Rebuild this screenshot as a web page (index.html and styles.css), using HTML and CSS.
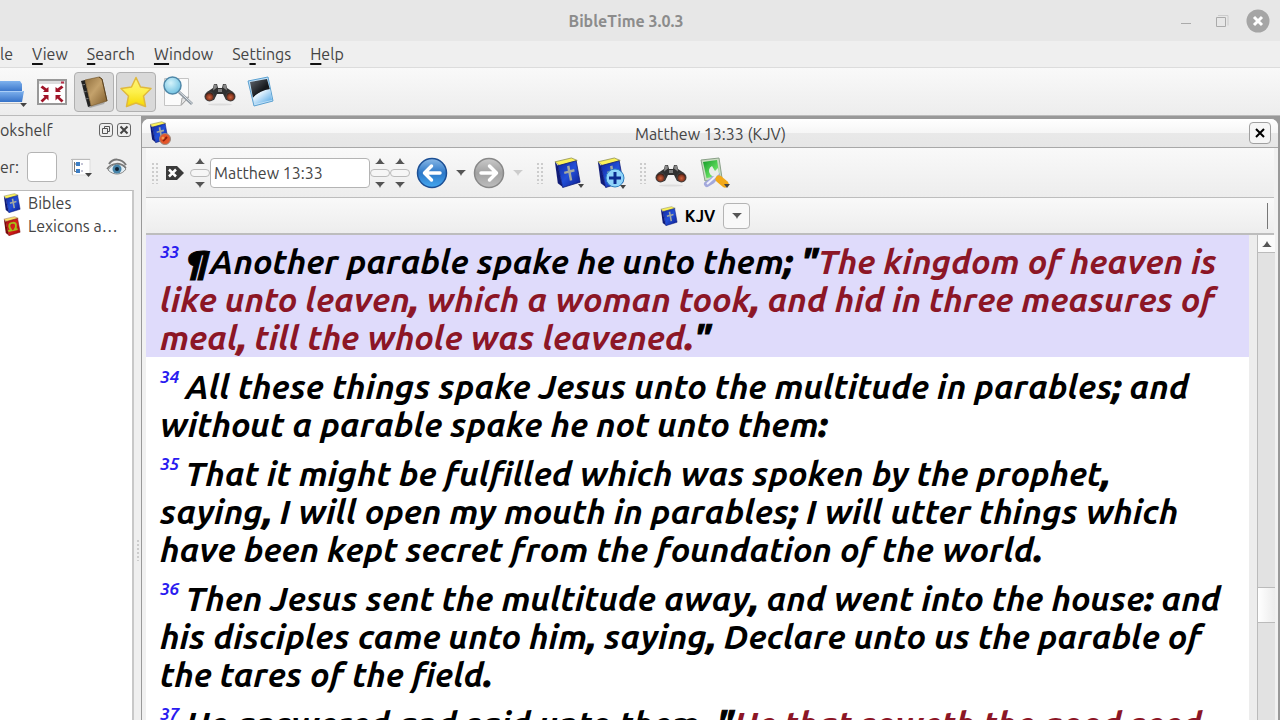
FILE: index.html
```html
<!DOCTYPE html>
<html lang="en">
<head>
	<meta charset="utf-8">
	<meta name="viewport" content="width=device-width, initial-scale=1">
	<title>BibleTime 3.0.3</title>
	<link rel="stylesheet" href="styles.css">
</head>
<body>
	<!-- shared icons -->
	<svg class="sprite" aria-hidden="true">
		<defs>
			<linearGradient id="blue-cover" x1="0" y1="0" x2="1" y2="1">
				<stop offset="0" stop-color="#1026a0"/>
				<stop offset=".5" stop-color="#2350d8"/>
				<stop offset="1" stop-color="#0a1a8c"/>
			</linearGradient>
			<linearGradient id="red-cover" x1="0" y1="0" x2="1" y2="1">
				<stop offset="0" stop-color="#a80c10"/>
				<stop offset=".5" stop-color="#d8201c"/>
				<stop offset="1" stop-color="#a00408"/>
			</linearGradient>
			<linearGradient id="tan-cover" x1="0" y1="0" x2="1" y2="1">
				<stop offset="0" stop-color="#8e6d3c"/>
				<stop offset=".45" stop-color="#c4a26c"/>
				<stop offset="1" stop-color="#7d5a2a"/>
			</linearGradient>
			<linearGradient id="gold" x1="0" y1="0" x2="0" y2="1">
				<stop offset="0" stop-color="#fff27a"/>
				<stop offset=".5" stop-color="#fdf04c"/>
				<stop offset="1" stop-color="#f6d800"/>
			</linearGradient>
			<linearGradient id="folder" x1="0" y1="0" x2="0" y2="1">
				<stop offset="0" stop-color="#7fb2ee"/>
				<stop offset="1" stop-color="#3672c8"/>
			</linearGradient>
			<linearGradient id="back-ball" x1="0" y1="0" x2="0" y2="1">
				<stop offset="0" stop-color="#8ab8e6"/>
				<stop offset=".5" stop-color="#2c78c8"/>
				<stop offset="1" stop-color="#45a8f0"/>
			</linearGradient>
			<linearGradient id="next-ball" x1="0" y1="0" x2="0" y2="1">
				<stop offset="0" stop-color="#cacaca"/>
				<stop offset=".5" stop-color="#a2a2a2"/>
				<stop offset="1" stop-color="#bdbdbd"/>
			</linearGradient>
			<radialGradient id="lens" cx=".4" cy=".35" r=".7">
				<stop offset="0" stop-color="#d4f3fb"/>
				<stop offset="1" stop-color="#6cbfe0"/>
			</radialGradient>
			<radialGradient id="glass" cx=".5" cy=".6" r=".6">
				<stop offset="0" stop-color="#d0603a"/>
				<stop offset=".6" stop-color="#8a3a22"/>
				<stop offset="1" stop-color="#2a1a16"/>
			</radialGradient>
			<linearGradient id="dark-screen" x1="0" y1="0" x2="1" y2="1">
				<stop offset="0" stop-color="#62676e"/>
				<stop offset=".6" stop-color="#15181c"/>
			</linearGradient>
			<linearGradient id="light-screen" x1="0" y1="0" x2="1" y2="1">
				<stop offset=".3" stop-color="#eaf6ff"/>
				<stop offset="1" stop-color="#4aa3e4"/>
			</linearGradient>
			<linearGradient id="green" x1="0" y1="0" x2="1" y2="1">
				<stop offset="0" stop-color="#149a28"/>
				<stop offset=".6" stop-color="#5bd85a"/>
				<stop offset="1" stop-color="#b8f2a8"/>
			</linearGradient>
		</defs>
		<symbol id="bible" viewBox="0 0 32 32">
			<path d="M3 5 20 1l6 2.500-18 5.500z" fill="#fbf25a" stroke="#8c8c50" stroke-width=".8"/>
			<path d="M3 5l3 4 5 22-5-4z" fill="#101c78"/>
			<path d="M6 9 25 4l4 22-18 5.500z" fill="url(#blue-cover)" stroke="#0c1a78" stroke-width=".8"/>
			<path d="M15.500 9.500l2.500-.6.9 4.600 4-1 .5 2.400-4 1 1.500 8-2.500.6-1.500-8-4 1-.5-2.400 4-1z" fill="#a4aaa0"/>
		</symbol>
		<symbol id="lexicon" viewBox="0 0 32 32">
			<path d="M3 5 20 1l6 2.500-18 5.500z" fill="#fbdf6a" stroke="#9c7a50" stroke-width=".8"/>
			<path d="M3 5l3 4 5 22-5-4z" fill="#780b0b"/>
			<path d="M6 9 25 4l4 22-18 5.500z" fill="url(#red-cover)" stroke="#780c0c" stroke-width=".8"/>
			<path d="M10 24l5-1c-6-7-3-12 2-12 6-1 7 6 3 11l5-1" fill="none" stroke="#a3c018" stroke-width="3"/>
		</symbol>
		<symbol id="binoculars" viewBox="0 0 32 32">
			<ellipse cx="16" cy="28.500" rx="12" ry="1" fill="#dcdcdc"/>
			<path d="M10 8h3l1 4h4l1-4h3l1 4 6 4 2 5-3 4-6-1-3-6h-6l-3 6-6 1-3-4 2-5 6-4z" fill="#303030"/>
			<path d="M10 8.500h2.500l.5 3-4 3zM22 8.500h-2.500l-.5 3 4 3z" fill="#888"/>
			<path d="M14 13h4v3h-4z" fill="#808080"/>
			<circle cx="5.500" cy="20.500" r="5" fill="#444"/>
			<circle cx="5.500" cy="20.500" r="4" fill="url(#glass)"/>
			<circle cx="26.500" cy="20.500" r="5" fill="#444"/>
			<circle cx="26.500" cy="20.500" r="4" fill="url(#glass)"/>
		</symbol>
		<symbol id="arrow-up" viewBox="0 0 10 6"><path d="M0 6C2 5 4 2 5 0c1 2 3 5 5 6z" fill="currentColor"/></symbol>
		<symbol id="arrow-down" viewBox="0 0 10 6"><path d="M0 0c2 0 8 0 10 0C8 2 6 3 5 6 4 3 2 2 0 0z" fill="currentColor"/></symbol>
	</svg>

	<header class="titlebar">
		<h1>BibleTime 3.0.3</h1>
		<div class="window-buttons">
			<button type="button" aria-label="Minimize"><svg width="24" height="24" viewBox="0 0 24 24"><path d="M7 14.500h10" stroke="#aaa"/></svg></button>
			<button type="button" aria-label="Restore"><svg width="24" height="24" viewBox="0 0 24 24"><path d="M6.500 8.500h9v9h-9z" fill="none" stroke="#aaa"/><path d="M8 6.500h10v10" fill="none" stroke="#ccc"/></svg></button>
			<button type="button" aria-label="Close"><svg width="24" height="24" viewBox="0 0 24 24"><circle cx="12" cy="12" r="11.500" fill="#a5a5a5"/><path d="M8 8l8 8M16 8l-8 8" stroke="#fff" stroke-width="3"/></svg></button>
		</div>
	</header>

	<nav class="menubar">
		<a href="#">le</a>
		<a href="#"><u>V</u>iew</a>
		<a href="#"><u>S</u>earch</a>
		<a href="#"><u>W</u>indow</a>
		<a href="#">Se<u>t</u>tings</a>
		<a href="#"><u>H</u>elp</a>
	</nav>

	<div class="toolbar">
		<button type="button" class="tool first" aria-label="Open work">
			<svg width="30" height="32" viewBox="10 0 30 32">
				<path d="M0 5h30l2 3v8H0z" fill="url(#folder)"/>
				<path d="M0 15h34l-2 11H0z" fill="url(#folder)"/>
				<path d="M0 15.500h33" stroke="#a9cdf6"/>
				<path d="M0 27.500h30" stroke="#c4c4c4"/>
				<path d="M30 27h7l-3.500 4z" fill="#444"/>
			</svg>
		</button>
		<button type="button" class="tool" aria-label="Fullscreen">
			<svg width="32" height="32" viewBox="0 0 32 32">
				<path d="M2 4h28v24H2z" fill="#fff" stroke="#999" stroke-width="2"/>
				<path d="M3 5h26v3H3z" fill="#ddd"/><path d="M25 6.500h3" stroke="#b8304a" stroke-width="2"/>
				<path d="M12.500 16v-5l-2 1.500-4-3-2 2 4 3L7 16zM19.500 16v-5l2 1.500 4-3 2 2-4 3L25 16zM12.500 19v5.500l-2-2-4 4-2-2 4-3.500L7 19zM19.500 19v5.500l2-2 4 4 2-2-4-3.500L25 19z" fill="#a01428"/>
			</svg>
		</button>
		<button type="button" class="tool active" aria-label="Show bookshelf">
			<svg width="32" height="32" viewBox="1 0 32 32">
				<path d="M11 31l17-5-1 2-14 4z" fill="#aaa"/>
				<path d="M4 5l4-1 6 26-3 1z" fill="#222"/>
				<path d="M8 4l14-3 3 2 5 22-16 5z" fill="url(#tan-cover)" stroke="#6b4d22" stroke-width=".6"/>
				<path d="M22 1l3 2 5 22" fill="none" stroke="#5c4320"/>
				<path d="M5 9l3-.6M6.500 16l3-.6M8.500 23l3-.6" stroke="#777"/>
			</svg>
		</button>
		<button type="button" class="tool active" aria-label="Show bookmarks">
			<svg width="32" height="32" viewBox="0 0 32 32">
				<path d="M16 1.500l4.500 9.500 10.500 1.500-7.500 7.500 2 10.500L16 27l-9.500 3.500 2-10.500L1 12.500 11.500 11z" fill="url(#gold)" stroke="#e0b93c" stroke-width="1.500" stroke-linejoin="round"/>
			</svg>
		</button>
		<button type="button" class="tool" aria-label="Show mag">
			<svg width="32" height="32" viewBox="0 0 32 32">
				<path d="M2.500 2.500h24v19l-7 8h-17z" fill="#fbfbfb" stroke="#c4c4c4"/>
				<path d="M19 29l1-7 7-1z" fill="#e4e4e4" stroke="#aaa"/>
				<path d="M17 16l13 12" stroke="#8d97a0" stroke-width="3"/><path d="M17 15.500l13 12" stroke="#dfe5ea"/>
				<circle cx="10.500" cy="9.500" r="8.500" fill="url(#lens)" stroke="#4e87a8" stroke-width="1.500"/>
			</svg>
		</button>
		<button type="button" class="tool" aria-label="Search in open works"><svg width="32" height="32"><use href="#binoculars"/></svg></button>
		<button type="button" class="tool" aria-label="Tile windows">
			<svg width="32" height="32" viewBox="1 0 32 32">
				<path d="M3 5l20-4 5 24-19 5z" fill="#bfe0f8" stroke="#5ba0d0"/>
				<path d="M5 6l17-3 3 11c-8 1-14 4-17 8z" fill="url(#dark-screen)"/>
				<path d="M25 13l2 11-17 4-2-6c4-5 10-8 17-9z" fill="url(#light-screen)"/>
			</svg>
		</button>
	</div>

	<div class="workspace">
		<aside class="dock">
			<div class="dock-head">
				<h2>okshelf</h2>
				<button type="button" aria-label="Float"><svg width="14" height="14" viewBox="0 0 14 14"><path d="M5.500 3.500h5v5h-5z" fill="none" stroke="#555"/><path d="M3.500 5.500h5v5h-5z" fill="#eee" stroke="#555"/></svg></button>
				<button type="button" aria-label="Close bookshelf"><svg width="14" height="14" viewBox="0 0 14 14"><path d="M3.500 3.500l7 7M10.500 3.500l-7 7" stroke="#444" stroke-width="2"/></svg></button>
			</div>
			<div class="filter">
				<label for="filter">er:</label>
				<input type="text" id="filter">
				<button type="button" aria-label="Grouping">
					<svg width="24" height="24" viewBox="0 0 24 24">
						<path d="M3 4h18v16H3z" fill="#fff" stroke="#ddd"/><path d="M2 4.500h19M3.500 4v16" stroke="#bbb"/>
						<path d="M5.500 7v9.500H8M5.500 9H8" fill="none" stroke="#777"/>
						<path d="M7 7h4v4H7zM7 14h4v4H7z" fill="#3d7ec4"/><path d="M12 9h2M12 16h2" stroke="#88a"/>
						<path d="M16 18h7l-3.500 4z" fill="#444"/>
					</svg>
				</button>
				<button type="button" aria-label="Show hidden works">
					<svg width="22" height="24" viewBox="0 0 22 24">
						<path d="M3 9c4-6 12-6 17 1" fill="none" stroke="#777" stroke-width="2"/>
						<path d="M2 15c4-7 13-8 18-1-4 6-12 7-18 1z" fill="#e2edf3" stroke="#888"/>
						<path d="M1 14c5-7 14-7 19-1" fill="none" stroke="#777" stroke-width="1.500"/>
						<circle cx="11" cy="14" r="4.500" fill="#4683a8"/><circle cx="11" cy="14" r="2" fill="#123"/>
					</svg>
				</button>
			</div>
			<ul class="tree">
				<li><svg width="20" height="20"><use href="#bible"/></svg>Bibles</li>
				<li><svg width="20" height="20"><use href="#lexicon"/></svg>Lexicons a…</li>
			</ul>
		</aside>

		<div class="splitter"><span class="grip"></span></div>

		<main class="mdi">
			<section class="reader">
				<div class="reader-title">
					<svg width="24" height="24" viewBox="0 0 24 24">
						<use href="#bible" width="22" height="22"/>
						<circle cx="17" cy="18" r="5.500" fill="#e4562a" stroke="#9a8a80"/><path d="M15 20l4-4" stroke="#8c1c08" stroke-width="2"/><circle cx="15" cy="17" r="1.500" fill="#f59a50"/>
					</svg>
					<h2>Matthew 13:33 (KJV)</h2>
					<button type="button" aria-label="Close window"><svg width="20" height="20" viewBox="0 0 20 20"><path d="M6 6l8 8M14 6l-8 8" stroke="#000" stroke-width="2"/></svg></button>
				</div>

				<div class="reader-tools">
					<span class="handle"></span>
					<button type="button" class="clear" aria-label="Clear reference">
						<svg width="18" height="14" viewBox="0 0 18 14"><path d="M0 0h11l7 7-7 7H0z" fill="#3a3a3a"/><path d="M3 3.500l7 7M10 3.500l-7 7" stroke="#fff" stroke-width="2.500"/></svg>
					</button>
					<div class="spinner">
						<button type="button" aria-label="Previous book"><svg width="10" height="6"><use href="#arrow-up"/></svg></button>
						<button type="button" class="pill" aria-label="Choose book"></button>
						<button type="button" aria-label="Next book"><svg width="10" height="6"><use href="#arrow-down"/></svg></button>
					</div>
					<input type="text" class="reference" aria-label="Reference" value="Matthew 13:33">
					<div class="spinner">
						<button type="button" aria-label="Previous chapter"><svg width="10" height="6"><use href="#arrow-up"/></svg></button>
						<button type="button" class="pill" aria-label="Choose chapter"></button>
						<button type="button" aria-label="Next chapter"><svg width="10" height="6"><use href="#arrow-down"/></svg></button>
					</div>
					<div class="spinner">
						<button type="button" aria-label="Previous verse"><svg width="10" height="6"><use href="#arrow-up"/></svg></button>
						<button type="button" class="pill" aria-label="Choose verse"></button>
						<button type="button" aria-label="Next verse"><svg width="10" height="6"><use href="#arrow-down"/></svg></button>
					</div>
					<div class="history">
						<button type="button" aria-label="Back">
							<svg width="32" height="32" viewBox="0 0 32 32"><circle cx="16" cy="16" r="14.500" fill="url(#back-ball)" stroke="#1c4f94" stroke-width="1.500"/><path d="M24 16H9M15.500 9l-7 7 7 7" fill="none" stroke="#fff" stroke-width="3.500" stroke-linecap="round" stroke-linejoin="round"/></svg>
						</button>
						<button type="button" class="drop" aria-label="Back history"><svg width="10" height="6"><use href="#arrow-down"/></svg></button>
						<button type="button" aria-label="Forward">
							<svg width="32" height="32" viewBox="0 0 32 32"><circle cx="16" cy="16" r="14.500" fill="url(#next-ball)" stroke="#888" stroke-width="1.500"/><path d="M8 16h15M16.500 9l7 7-7 7" fill="none" stroke="#fff" stroke-width="3.500" stroke-linecap="round" stroke-linejoin="round"/></svg>
						</button>
						<button type="button" class="drop off" aria-label="Forward history"><svg width="10" height="6"><use href="#arrow-down"/></svg></button>
					</div>
					<span class="handle"></span>
					<button type="button" class="tool" aria-label="Works">
						<svg width="32" height="32" viewBox="0 0 32 32"><use href="#bible" width="31" height="31"/><path d="M26 27h6l-3 4z" fill="#444"/></svg>
					</button>
					<button type="button" class="tool" aria-label="Add parallel work">
						<svg width="32" height="32" viewBox="0 0 32 32"><use href="#bible" width="31" height="31"/><circle cx="20" cy="21" r="9" fill="#8fd4fa" stroke="#2c7fc0"/><path d="M20 15v12M14 21h12" stroke="#0c2c90" stroke-width="3"/><path d="M25 28h6l-3 4z" fill="#444"/></svg>
					</button>
					<span class="handle"></span>
					<button type="button" class="tool" aria-label="Search"><svg width="32" height="32"><use href="#binoculars"/></svg></button>
					<button type="button" class="tool" aria-label="Display options">
						<svg width="32" height="32" viewBox="0 0 32 32">
							<path d="M3 3l18-2 3 20-17 3z" fill="#c8dcc0" stroke="#8aa088"/>
							<path d="M5 5l14-2 2.500 16-13 2z" fill="url(#green)"/>
							<path d="M9 27l5-3 5-6" fill="none" stroke="#a3a9dc" stroke-width="6" stroke-linecap="round"/>
							<path d="M9 27l9-8" stroke="#f0f1fc" stroke-width="2"/>
							<path d="M14 9a5.500 5.500 0 1 0 7 8l-1-6-3 3z" fill="#e9ede9"/>
							<path d="M21 22l6 5" stroke="#f2a818" stroke-width="7" stroke-linecap="round"/>
							<path d="M26 27h6l-3 4z" fill="#444"/>
						</svg>
					</button>
				</div>

				<div class="work-bar">
					<div class="work">
						<svg width="20" height="20"><use href="#bible"/></svg>
						<span>KJV</span>
						<button type="button" aria-label="Choose work"><svg width="10" height="6"><use href="#arrow-down"/></svg></button>
					</div>
				</div>

				<div class="reader-body">
					<article class="text">
						<p class="verse current"><a href="#">33</a><b>¶</b>Another parable spake he unto them<b>;</b> <b>"</b><em>The kingdom of heaven is<br>
							like unto leaven<b>,</b> which a woman took<b>,</b> and hid in three measures of<br>
							meal<b>,</b> till the whole was leavened<b>.</b></em><b>"</b></p>
						<p class="verse"><a href="#">34</a>All these things spake Jesus unto the multitude in parables<b>;</b> and<br>
							without a parable spake he not unto them<b>:</b></p>
						<p class="verse"><a href="#">35</a>That it might be fulfilled which was spoken by the prophet<b>,</b><br>
							saying<b>,</b> I will open my mouth in parables<b>;</b> I will utter things which<br>
							have been kept secret from the foundation of the world<b>.</b></p>
						<p class="verse"><a href="#">36</a>Then Jesus sent the multitude away<b>,</b> and went into the house<b>:</b> and<br>
							his disciples came unto him<b>,</b> saying<b>,</b> Declare unto us the parable of<br>
							the tares of the field<b>.</b></p>
						<p class="verse"><a href="#">37</a>He answered and said unto them<b>,</b> <b>"</b><em>He that soweth the good seed</em></p>
					</article>
					<div class="scrollbar">
						<button type="button" aria-label="Scroll up"><svg width="10" height="6"><use href="#arrow-up"/></svg></button>
						<div class="track"><div class="thumb"></div></div>
					</div>
				</div>
			</section>
		</main>
	</div>
</body>
</html>
```
FILE: styles.css
```css
*{
	margin: 0;
	padding: 0;
	box-sizing: border-box;
}
body{
	height: 100vh;
	display: flex;
	flex-direction: column;
	overflow: hidden;
	background: #efefef;
	color: #444;
	font-family: Ubuntu, "Noto Sans", sans-serif;
	font-size: 16px;
	line-height: 20px;
}
button{
	display: flex;
	align-items: center;
	justify-content: center;
	flex-shrink: 0;
	border: none;
	background: none;
	color: #555;
	font: inherit;
}
svg{
	display: block;
	flex-shrink: 0;
}
input{
	border: 1px solid #b4b4b4;
	border-radius: 4px;
	background: white;
	color: #444;
	font: inherit;
}
h1, h2{
	font-size: 16px;
	font-weight: normal;
}
.sprite{
	position: absolute;
	width: 0;
	height: 0;
}

/* window frame */
.titlebar{
	height: 41px;
	display: grid;
	grid-template-columns: 120px 1fr 120px;
	align-items: center;
	background: #e7e7e7;
}
.titlebar h1{
	grid-column: 2;
	padding-right: 28px;
	text-align: center;
	font-weight: bold;
	color: #8c8c8c;
}
.window-buttons{
	display: flex;
	justify-content: flex-end;
	gap: 12px;
	padding-right: 10px;
}
.menubar{
	height: 27px;
	display: flex;
	align-items: center;
	gap: 19px;
	border-bottom: 1px solid #dcdcdc;
}
.menubar a{
	color: #444;
	text-decoration: none;
}
.menubar u{
	text-decoration: underline;
	text-decoration-color: #111;
	text-decoration-thickness: 2px;
	text-underline-offset: 3px;
	text-decoration-skip-ink: none;
}
.toolbar{
	height: 48px;
	display: flex;
	align-items: center;
	gap: 2px;
	border-bottom: 1px solid #bbb;
	background: linear-gradient(#f9f9f9, #ededed);
}
.tool{
	width: 40px;
	height: 40px;
	border-radius: 4px;
}
.tool.first{
	width: 30px;
}
.tool.active{
	border: 1px solid #b0b0b0;
	background: #d9d9d9;
}
.workspace{
	flex: 1;
	min-height: 0;
	display: flex;
}

/* bookshelf */
.dock{
	width: 134px;
	flex-shrink: 0;
	display: flex;
	flex-direction: column;
}
.dock-head{
	height: 28px;
	display: flex;
	align-items: center;
	gap: 4px;
	padding-right: 3px;
}
.dock-head h2{
	flex: 1;
}
.dock-head button{
	width: 14px;
	height: 14px;
	border: 1px solid #666;
	border-radius: 3px;
}
.filter{
	height: 46px;
	display: flex;
	align-items: center;
	gap: 8px;
}
.filter input{
	width: 30px;
	height: 30px;
	margin-right: 4px;
}
.filter button:last-child{
	margin-left: 5px;
}
.tree{
	flex: 1;
	border-top: 1px solid #bbb;
	border-right: 2px solid #c8c8c8;
	background: white;
	list-style: none;
}
.tree li{
	height: 23px;
	display: flex;
	align-items: center;
	gap: 6px;
	padding-left: 2px;
	white-space: nowrap;
}
.splitter{
	width: 7px;
	flex-shrink: 0;
	display: flex;
	justify-content: center;
	padding-top: 423px;
}
.grip{
	width: 4px;
	height: 22px;
	background: radial-gradient(circle, #ccc 1px, transparent 1px) 0 0 / 4px 4px;
}

/* reading window */
.mdi{
	flex: 1;
	min-width: 0;
	padding-top: 2px;
	background: #999;
}
.reader{
	height: 100%;
	display: flex;
	flex-direction: column;
	margin-right: 1px;
	border: 1px solid #999;
	border-bottom: none;
	border-radius: 8px 8px 0 0;
	background: #f1f1f1;
	overflow: hidden;
}
.reader-title{
	height: 29px;
	flex-shrink: 0;
	display: flex;
	align-items: center;
	padding: 0 7px 0 6px;
	border-bottom: 1px solid #a8a8a8;
	background: linear-gradient(#fff, #f6f6f6 50%, #e9e9e9 51%, #e6e6e6);
}
.reader-title h2{
	flex: 1;
	padding-top: 2px;
	text-align: center;
}
.reader-title button{
	width: 22px;
	height: 22px;
	border: 1px solid #a0a0a0;
	border-radius: 4px;
	background: #f6f6f6;
}
.reader-tools{
	height: 50px;
	flex-shrink: 0;
	display: flex;
	align-items: center;
	margin: 0 4px;
	padding-left: 5px;
	border-bottom: 1px solid #bdbdbd;
	background: linear-gradient(#f9f9f9, #ededed);
}
.handle{
	width: 8px;
	height: 22px;
	flex-shrink: 0;
	background: radial-gradient(circle, #ccc 1px, transparent 1px) 0 0 / 4px 4px;
}
.clear{
	padding: 0 6px 0 7px;
}
.spinner{
	width: 20px;
	height: 30px;
	flex-shrink: 0;
	display: flex;
	flex-direction: column;
	align-items: center;
	justify-content: space-between;
}
.spinner .pill{
	width: 20px;
	height: 8px;
	border: 1px solid #bbb;
	border-radius: 4px;
	background: #f6f6f6;
}
.reference{
	width: 160px;
	height: 30px;
	padding: 0 3px;
}
.history{
	display: flex;
	align-items: center;
	padding: 0 6px;
}
.drop{
	width: 25px;
	height: 32px;
}
.drop.off{
	color: #ccc;
}
.reader-tools .tool{
	width: 43px;
}
.reader-tools .handle + .tool{
	margin-left: 2px;
}
.reader-tools .tool + .handle{
	margin-left: 7px;
}
.work-bar{
	height: 37px;
	flex-shrink: 0;
	display: flex;
	align-items: center;
	margin: 0 4px;
	padding-right: 6px;
	border-bottom: 2px solid #bdbdbd;
	background: linear-gradient(#f9f9f9, #ededed);
}
.work{
	flex: 1;
	display: flex;
	align-items: center;
	justify-content: center;
	gap: 6px;
	padding-right: 4px;
}
.work span{
	color: black;
	font-weight: bold;
}
.work button{
	width: 27px;
	height: 26px;
	margin-left: 2px;
	border: 1px solid #b4b4b4;
	border-radius: 4px;
	background: #f8f8f8;
}
.work-bar::after{
	content: "";
	width: 1px;
	height: 26px;
	background: #777;
}
.reader-body{
	flex: 1;
	min-height: 0;
	display: flex;
	margin: 0 3px 0 4px;
}
.text{
	flex: 1;
	min-width: 0;
	overflow: hidden;
	border-right: 8px solid #ededed;
	background: white;
	color: black;
	font-size: 34px;
	font-style: italic;
	font-weight: bold;
	line-height: 38px;
	white-space: nowrap;
}
.verse{
	margin-bottom: 3px;
	padding: 7px 14px 1px;
}
.verse.current{
	background: #dfdbfb;
}
.verse a{
	margin-right: 6px;
	color: #2a1cf0;
	font-size: 17px;
	line-height: 0;
	text-decoration: none;
	vertical-align: 16px;
}
.verse b{
	-webkit-text-stroke: 1px;
}
.verse em{
	color: #8c1626;
}
.scrollbar{
	width: 18px;
	flex-shrink: 0;
	display: flex;
	flex-direction: column;
	border-left: 1px solid #bbb;
	background: #e2e2e2;
}
.scrollbar button{
	height: 18px;
	border-bottom: 1px solid #bbb;
	background: #fafafa;
}
.track{
	flex: 1;
	display: grid;
	grid-template-rows: 335fr 36px 97fr;
}
.thumb{
	grid-row: 2;
	border: 1px solid #bbb;
	border-width: 1px 0;
	background: linear-gradient(90deg, #fff, #ececec);
}
```
